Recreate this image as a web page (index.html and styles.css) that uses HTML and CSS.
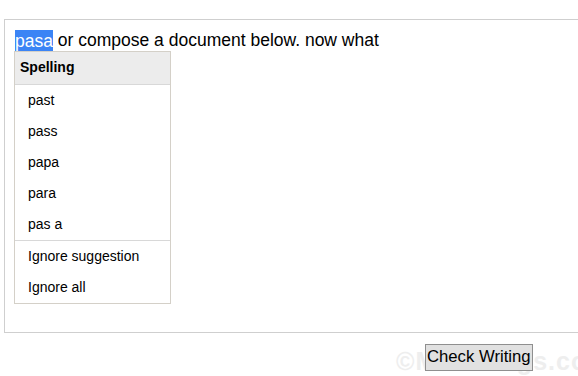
FILE: index.html
```html
<!DOCTYPE html>
<html lang="en">
<head>
  <meta charset="UTF-8">
  <title>Check Writing</title>
  <link rel="stylesheet" href="styles.css">
</head>
<body>
  <div class="editor">
    <div class="doc"><span class="wrap"><span class="misspelled">pasa</span><span class="spell-menu">
        <span class="spell-head">Spelling</span>
        <span class="spell-item">past</span>
        <span class="spell-item">pass</span>
        <span class="spell-item">papa</span>
        <span class="spell-item">para</span>
        <span class="spell-item">pas a</span>
        <span class="spell-item sep">Ignore suggestion</span>
        <span class="spell-item">Ignore all</span>
      </span></span> or compose a document below. now what</div>
  </div>
  <div class="actions">
    <span class="watermark">©Metablogs.com</span>
    <button class="check-btn">Check Writing</button>
  </div>
</body>
</html>
```
FILE: styles.css
```css
body {
  margin: 0;
  padding: 19px 0 0 4px;
  font-family: 'Liberation Sans', Arial, sans-serif;
  color: #000;
  background: #fff;
  overflow: hidden;
}
.editor {
  border: 1px solid #cfcfcf;
  border-right: none;
  height: 292px;
  padding: 10px;
}
.doc {
  font-size: 17.5px;
  line-height: 21px;
}
.wrap {
  position: relative;
}
.misspelled {
  background: #3b84f5;
  color: #fff;
  padding: 0.5px 0;
}
.spell-menu {
  display: block;
  position: absolute;
  top: 21px;
  left: -1px;
  width: 155px;
  border: 1px solid #d4d0c8;
  background: #fff;
  color: #000;
  font-size: 14px;
  line-height: normal;
  z-index: 2;
}
.spell-head {
  display: block;
  height: 32px;
  line-height: 31px;
  padding-left: 5px;
  background: #ececec;
  font-weight: bold;
  border-bottom: 1px solid #d8d8d8;
}
.spell-item {
  display: block;
  height: 31px;
  line-height: 31px;
  padding-left: 13px;
}
.spell-item.sep {
  border-top: 1px solid #d8d8d8;
}
.actions {
  position: relative;
  height: 40px;
  padding-top: 11px;
  overflow: hidden;
}
.watermark {
  position: absolute;
  left: 392px;
  top: 14px;
  font-size: 25px;
  font-weight: bold;
  color: #eeeeee;
  letter-spacing: 1px;
  white-space: nowrap;
}
.check-btn {
  position: relative;
  margin-left: 421px;
  font-family: 'Liberation Sans', Arial, sans-serif;
  font-size: 16.7px;
  padding: 2px 1px 3px;
  background: #e1e1e1;
  border: 1px solid #8f8f8f;
  border-radius: 0;
  color: #000;
}
```
